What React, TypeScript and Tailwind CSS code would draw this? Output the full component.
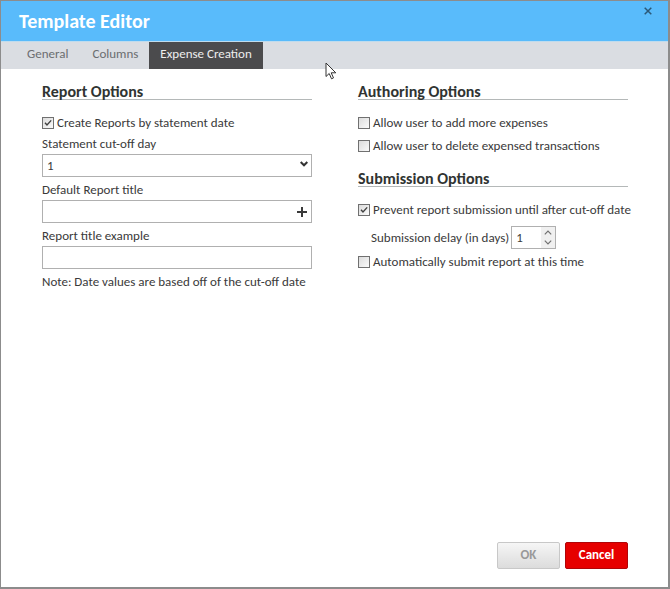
import { useState, type ReactNode } from "react";

function Section({ title, children }: { title: string; children: ReactNode }) {
  return (
    <section>
      <h2 className="mb-[11px] h-[17px] border-b border-[#b4b8b8] text-[16px] leading-[18px] font-bold text-[#303432]">
        {title}
      </h2>
      {children}
    </section>
  );
}

function CheckRow({ label, defaultChecked = false }: { label: string; defaultChecked?: boolean }) {
  return (
    <label className="flex h-[23px] items-center gap-[3px] whitespace-nowrap">
      <span className="grid size-3 shrink-0">
        <input
          type="checkbox"
          defaultChecked={defaultChecked}
          className="peer col-start-1 row-start-1 size-3 appearance-none border border-[#707070] bg-linear-to-br from-[#dcdcdc] to-[#fafafa]"
        />
        <svg
          viewBox="0 0 12 12"
          className="pointer-events-none invisible col-start-1 row-start-1 size-3 peer-checked:visible"
          fill="none"
          stroke="#404040"
          strokeWidth="1.4"
        >
          <path d="M3 5.7 5 8 9.2 3.4" />
        </svg>
      </span>
      {label}
    </label>
  );
}

const tabs = ["General", "Columns", "Expense Creation"];

export default function App() {
  const [active, setActive] = useState("Expense Creation");
  const [days, setDays] = useState(1);

  return (
    <div className="flex min-h-screen flex-col border-t-1 border-r-2 border-b-2 border-l-1 border-[#8c8c8c] bg-white font-['Carlito','Lato',sans-serif] text-[13px] leading-5 text-[#3a3a3a]">
      <header className="flex h-10 items-start justify-between bg-[#59bbfb] pr-[15px] pl-[18px]">
        <h1 className="text-[20px] leading-10 font-bold text-white">Template Editor</h1>
        <button type="button" aria-label="Close" className="mt-[5px] p-px text-[#2b5878]">
          <svg viewBox="0 0 8 8" className="size-2" fill="none" stroke="currentColor" strokeWidth="1.5">
            <path d="M.7.7 7.3 7.3M7.3.7.7 7.3" />
          </svg>
        </button>
      </header>

      <nav className="flex h-7 border-t border-[#bfdcee] bg-[#dadde2] pl-[13px]">
        {tabs.map((tab) => (
          <button
            key={tab}
            type="button"
            onClick={() => setActive(tab)}
            className={
              tab === active
                ? "bg-[#4b4b4d] px-[11px] pb-1 text-[#eeeeee]"
                : "pr-[11px] pl-[13px] pb-1 text-[#6b6d70]"
            }
          >
            {tab}
          </button>
        ))}
      </nav>

      <main className="grid grid-cols-2 gap-[46px] pt-[14px] pr-10 pl-[41px]">
        <Section title="Report Options">
          <CheckRow label="Create Reports by statement date" defaultChecked />
          <div className="flex flex-col gap-[3px]">
            <div>
              <label htmlFor="cutoff" className="block">Statement cut-off day</label>
              <div className="grid">
                <select
                  id="cutoff"
                  defaultValue="1"
                  className="col-start-1 row-start-1 h-[23px] w-full appearance-none border border-[#b0b0b0] bg-white px-1 text-[13px]"
                >
                  <option>1</option>
                  <option>2</option>
                  <option>3</option>
                </select>
                <svg
                  viewBox="0 0 8 6"
                  className="pointer-events-none col-start-1 row-start-1 mt-[7px] mr-1 h-[6px] w-2 justify-self-end"
                  fill="none"
                  stroke="#333"
                  strokeWidth="2"
                >
                  <path d="M.7 1 4 4.3 7.3 1" />
                </svg>
              </div>
            </div>
            <div>
              <label htmlFor="title" className="block">Default Report title</label>
              <div className="flex h-[23px] items-center border border-[#b0b0b0] pr-1">
                <input id="title" type="text" className="h-full min-w-0 grow px-1 outline-none" />
                <button type="button" aria-label="Insert field" className="text-[#3a3a3a]">
                  <svg viewBox="0 0 10 10" className="size-[10px]" fill="none" stroke="currentColor" strokeWidth="2">
                    <path d="M5 0v10M0 5h10" />
                  </svg>
                </button>
              </div>
            </div>
            <div>
              <label htmlFor="example" className="block">Report title example</label>
              <input id="example" type="text" className="block h-[23px] w-full border border-[#b0b0b0] px-1" />
            </div>
            <p>Note: Date values are based off of the cut-off date</p>
          </div>
        </Section>

        <div className="flex flex-col gap-[13px]">
          <Section title="Authoring Options">
            <CheckRow label="Allow user to add more expenses" />
            <CheckRow label="Allow user to delete expensed transactions" />
          </Section>
          <Section title="Submission Options">
            <CheckRow label="Prevent report submission until after cut-off date" defaultChecked />
            <div className="mt-[5px] mb-px flex items-center gap-[2px] pl-[13px]">
              <label htmlFor="delay">Submission delay (in days)</label>
              <div className="flex h-[23px] w-[45px] border border-[#b0b0b0]">
                <input
                  id="delay"
                  type="text"
                  inputMode="numeric"
                  value={days}
                  onChange={(e) => setDays(Number(e.target.value) || 0)}
                  className="min-w-0 grow px-1 outline-none"
                />
                <div className="flex w-[14px] shrink-0 flex-col bg-[#f0f0f0] text-[#707070]">
                  <button
                    type="button"
                    aria-label="Increase"
                    onClick={() => setDays(days + 1)}
                    className="flex grow items-center justify-center"
                  >
                    <svg viewBox="0 0 8 5" className="h-[5px] w-2" fill="none" stroke="currentColor" strokeWidth="1.2">
                      <path d="M.8 4.3 4 1l3.2 3.3" />
                    </svg>
                  </button>
                  <button
                    type="button"
                    aria-label="Decrease"
                    onClick={() => setDays(Math.max(0, days - 1))}
                    className="flex grow items-center justify-center"
                  >
                    <svg viewBox="0 0 8 5" className="h-[5px] w-2" fill="none" stroke="currentColor" strokeWidth="1.2">
                      <path d="M.8.7 4 4 7.2.7" />
                    </svg>
                  </button>
                </div>
              </div>
            </div>
            <CheckRow label="Automatically submit report at this time" />
          </Section>
        </div>
      </main>

      <footer className="mt-auto flex justify-end gap-[5px] pt-4 pr-10 pb-[18px] font-bold">
        <button
          type="button"
          disabled
          className="h-[27px] w-[63px] rounded-xs border border-[#c8c8c8] bg-linear-to-b from-[#f6f6f6] to-[#dcdcdc] pb-[2px] text-[#999999]"
        >
          OK
        </button>
        <button type="button" className="h-[27px] w-[63px] rounded-xs border border-[#b00508] bg-[#e60000] pb-[2px] text-white">
          Cancel
        </button>
      </footer>

      <svg
        viewBox="0 0 12 18"
        className="pointer-events-none absolute top-[62px] left-[325px] h-[18px] w-3"
        fill="#fff"
        stroke="#333"
        strokeWidth="1"
      >
        <path d="M1 1v13.5l3.2-3 2.3 5.3 2-.9-2.3-5.1h4.6z" />
      </svg>
    </div>
  );
}
